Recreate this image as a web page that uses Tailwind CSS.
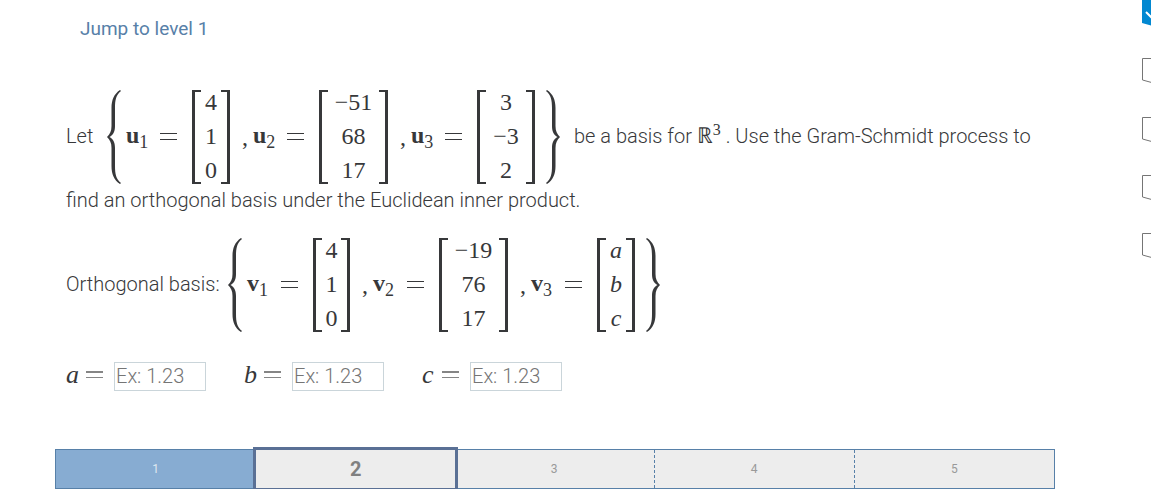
<!DOCTYPE html>
<html lang="en">
<head>
    <meta charset="UTF-8">
    <meta name="viewport" content="width=device-width, initial-scale=1.0">
    <title>Gram-Schmidt process</title>
    <script src="https://cdn.jsdelivr.net/npm/@tailwindcss/browser@4"></script>
</head>
<body class="bg-white font-['Roboto',sans-serif] text-[#37383a] overflow-x-hidden">
<div class="flex">
    <main class="flex-1 min-w-0 pt-[17px]">
        <a href="#" class="inline-block ml-20 text-[19px] leading-6 text-[#5780a8]">Jump to level 1</a>

        <!-- question -->
        <section class="ml-[66px] mt-12 text-xl leading-8 font-light">
            <div class="flex items-center">
                <span class="w-[41px] pb-0.5">Let</span>
                <svg class="w-[14px] h-[94px] shrink-0" viewBox="0 0 14 94" fill="#37383a"><path d="M13 0C7 4 4.500 10 4.500 18V36C4.500 41 3 44 0 47C3 50 4.500 53 4.500 58V76C4.500 84 7 90 13 94L14 93C9 89 8 84 8 76V58C8 52 6 49 2.500 47C6 45 8 42 8 36V18C8 10 9 5 14 1Z"/></svg>
                <div class="flex items-center ml-[5px] font-['Liberation_Serif',serif] text-2xl font-normal">
                    <span class="w-[34px] pb-1"><b>u</b><sub class="text-lg leading-none">1</sub></span>
                    <svg class="w-[17px] h-2" viewBox="0 0 17 8" fill="#37383a"><path d="M0 0h17v1H0zM0 6h17v1H0z"/></svg>
                    <div class="flex justify-between w-[38px] h-[94px] ml-[15px]">
                        <span class="w-[9px] border-2 border-l-3 border-r-0 border-[#37383a]"></span>
                        <div class="flex flex-col justify-between items-center pb-0.5 leading-6"><span>4</span><span>1</span><span>0</span></div>
                        <span class="w-[9px] border-2 border-r-3 border-l-0 border-[#37383a]"></span>
                    </div>
                    <span class="w-[11px] ml-3">,</span>
                    <span class="w-[34px] pb-1"><b>u</b><sub class="text-lg leading-none">2</sub></span>
                    <svg class="w-[17px] h-2" viewBox="0 0 17 8" fill="#37383a"><path d="M0 0h17v1H0zM0 6h17v1H0z"/></svg>
                    <div class="flex justify-between w-[69px] h-[94px] ml-[15px]">
                        <span class="w-[9px] border-2 border-l-3 border-r-0 border-[#37383a]"></span>
                        <div class="flex flex-col justify-between items-center pb-0.5 leading-6"><span>−51</span><span>68</span><span>17</span></div>
                        <span class="w-[9px] border-2 border-r-3 border-l-0 border-[#37383a]"></span>
                    </div>
                    <span class="w-[11px] ml-3">,</span>
                    <span class="w-[34px] pb-1"><b>u</b><sub class="text-lg leading-none">3</sub></span>
                    <svg class="w-[17px] h-2" viewBox="0 0 17 8" fill="#37383a"><path d="M0 0h17v1H0zM0 6h17v1H0z"/></svg>
                    <div class="flex justify-between w-[58px] h-[94px] ml-[15px]">
                        <span class="w-[9px] border-2 border-l-3 border-r-0 border-[#37383a]"></span>
                        <div class="flex flex-col justify-between items-center pb-0.5 leading-6"><span>3</span><span>−3</span><span>2</span></div>
                        <span class="w-[9px] border-2 border-r-3 border-l-0 border-[#37383a]"></span>
                    </div>
                </div>
                <svg class="w-[14px] h-[94px] ml-[11px] shrink-0 -scale-x-100" viewBox="0 0 14 94" fill="#37383a"><path d="M13 0C7 4 4.500 10 4.500 18V36C4.500 41 3 44 0 47C3 50 4.500 53 4.500 58V76C4.500 84 7 90 13 94L14 93C9 89 8 84 8 76V58C8 52 6 49 2.500 47C6 45 8 42 8 36V18C8 10 9 5 14 1Z"/></svg>
                <span class="ml-[14px] pb-0.5 whitespace-nowrap">be a basis for <span class="font-['DejaVu_Sans',sans-serif] text-[22px] leading-none">ℝ</span><sup class="font-['Liberation_Serif',serif] text-base leading-none font-normal">3</sup> . Use the Gram-Schmidt process to</span>
            </div>
            <p>find an orthogonal basis under the Euclidean inner product.</p>

            <div class="flex items-center mt-[22px]">
                <span class="w-[162px] pb-0.5 whitespace-nowrap">Orthogonal basis:</span>
                <svg class="w-[14px] h-[94px] shrink-0" viewBox="0 0 14 94" fill="#37383a"><path d="M13 0C7 4 4.500 10 4.500 18V36C4.500 41 3 44 0 47C3 50 4.500 53 4.500 58V76C4.500 84 7 90 13 94L14 93C9 89 8 84 8 76V58C8 52 6 49 2.500 47C6 45 8 42 8 36V18C8 10 9 5 14 1Z"/></svg>
                <div class="flex items-center ml-[5px] font-['Liberation_Serif',serif] text-2xl font-normal">
                    <span class="w-[34px] pb-1"><b>v</b><sub class="text-lg leading-none">1</sub></span>
                    <svg class="w-[17px] h-2" viewBox="0 0 17 8" fill="#37383a"><path d="M0 0h17v1H0zM0 6h17v1H0z"/></svg>
                    <div class="flex justify-between w-[37px] h-[94px] ml-[15px]">
                        <span class="w-[9px] border-2 border-l-3 border-r-0 border-[#37383a]"></span>
                        <div class="flex flex-col justify-between items-center pb-0.5 leading-6"><span>4</span><span>1</span><span>0</span></div>
                        <span class="w-[9px] border-2 border-r-3 border-l-0 border-[#37383a]"></span>
                    </div>
                    <span class="w-[11px] ml-3">,</span>
                    <span class="w-[34px] pb-1"><b>v</b><sub class="text-lg leading-none">2</sub></span>
                    <svg class="w-[17px] h-2" viewBox="0 0 17 8" fill="#37383a"><path d="M0 0h17v1H0zM0 6h17v1H0z"/></svg>
                    <div class="flex justify-between w-[69px] h-[94px] ml-[15px]">
                        <span class="w-[9px] border-2 border-l-3 border-r-0 border-[#37383a]"></span>
                        <div class="flex flex-col justify-between items-center pb-0.5 leading-6"><span>−19</span><span>76</span><span>17</span></div>
                        <span class="w-[9px] border-2 border-r-3 border-l-0 border-[#37383a]"></span>
                    </div>
                    <span class="w-[11px] ml-3">,</span>
                    <span class="w-[34px] pb-1"><b>v</b><sub class="text-lg leading-none">3</sub></span>
                    <svg class="w-[17px] h-2" viewBox="0 0 17 8" fill="#37383a"><path d="M0 0h17v1H0zM0 6h17v1H0z"/></svg>
                    <div class="flex justify-between w-[38px] h-[94px] ml-[15px]">
                        <span class="w-[9px] border-2 border-l-3 border-r-0 border-[#37383a]"></span>
                        <div class="flex flex-col justify-between items-center pb-0.5 leading-6 italic"><span>a</span><span>b</span><span>c</span></div>
                        <span class="w-[9px] border-2 border-r-3 border-l-0 border-[#37383a]"></span>
                    </div>
                </div>
                <svg class="w-[14px] h-[94px] ml-[11px] shrink-0 -scale-x-100" viewBox="0 0 14 94" fill="#37383a"><path d="M13 0C7 4 4.500 10 4.500 18V36C4.500 41 3 44 0 47C3 50 4.500 53 4.500 58V76C4.500 84 7 90 13 94L14 93C9 89 8 84 8 76V58C8 52 6 49 2.500 47C6 45 8 42 8 36V18C8 10 9 5 14 1Z"/></svg>
            </div>
        </section>

        <!-- answers -->
        <form class="flex gap-[38px] ml-[66px] mt-[29px]">
            <div class="flex items-center">
                <label for="answerA" class="flex items-center w-12 pb-0.5 font-['Liberation_Serif',serif] text-[26px] leading-7"><i class="w-5">a</i><svg class="w-[17px] h-2" viewBox="0 0 17 8" fill="#858585"><path d="M0 0h17v2H0zM0 6h17v1H0z"/></svg></label>
                <input id="answerA" type="text" placeholder="Ex: 1.23" class="w-[92px] h-[29px] border border-[#cad5da] px-px text-xl font-light placeholder:text-[#757575]">
            </div>
            <div class="flex items-center">
                <label for="answerB" class="flex items-center w-12 pb-0.5 font-['Liberation_Serif',serif] text-[26px] leading-7"><i class="w-5">b</i><svg class="w-[17px] h-2" viewBox="0 0 17 8" fill="#858585"><path d="M0 0h17v2H0zM0 6h17v1H0z"/></svg></label>
                <input id="answerB" type="text" placeholder="Ex: 1.23" class="w-[92px] h-[29px] border border-[#cad5da] px-px text-xl font-light placeholder:text-[#757575]">
            </div>
            <div class="flex items-center">
                <label for="answerC" class="flex items-center w-12 pb-0.5 font-['Liberation_Serif',serif] text-[26px] leading-7"><i class="w-5">c</i><svg class="w-[17px] h-2" viewBox="0 0 17 8" fill="#858585"><path d="M0 0h17v2H0zM0 6h17v1H0z"/></svg></label>
                <input id="answerC" type="text" placeholder="Ex: 1.23" class="w-[92px] h-[29px] border border-[#cad5da] px-px text-xl font-light placeholder:text-[#757575]">
            </div>
        </form>

        <!-- levels -->
        <div class="flex h-10 ml-[55px] mr-24 mt-[58px] border border-[#5780a8] bg-[#ededed] text-xs text-[#999999] mr-[87px]">
            <button class="flex-1 bg-[#87acd2] text-[#dfe8f1]">1</button>
            <button class="flex-1 -my-[3px] -ml-0.5 -mr-1 border-3 border-[#5a7095] bg-[#ededed] text-xl font-bold text-[#808080]">2</button>
            <button class="flex-1">3</button>
            <button class="flex-1 border-x border-dashed border-[#5780a8]">4</button>
            <button class="flex-1">5</button>
        </div>
    </main>

    <!-- progress markers, cut off by the window edge -->
    <aside class="w-[9px] shrink-0 overflow-hidden">
        <svg class="w-[30px] h-[270px] max-w-none" viewBox="0 0 30 270" fill="none">
            <path d="M0 0H30V23L15 27L0 23Z" fill="#0288d1"/>
            <path d="M4 12L9 17L19 6" stroke="#fff" stroke-width="2"/>
            <path d="M30 58.500H.5V80L15 84L30 80" stroke="#757575"/>
            <path d="M30 117.500H.5V139L15 143L30 139" stroke="#757575"/>
            <path d="M30 175.500H.5V197L15 201L30 197" stroke="#757575"/>
            <path d="M30 233.500H.5V255L15 259L30 255" stroke="#757575"/>
        </svg>
    </aside>
</div>
</body>
</html>
